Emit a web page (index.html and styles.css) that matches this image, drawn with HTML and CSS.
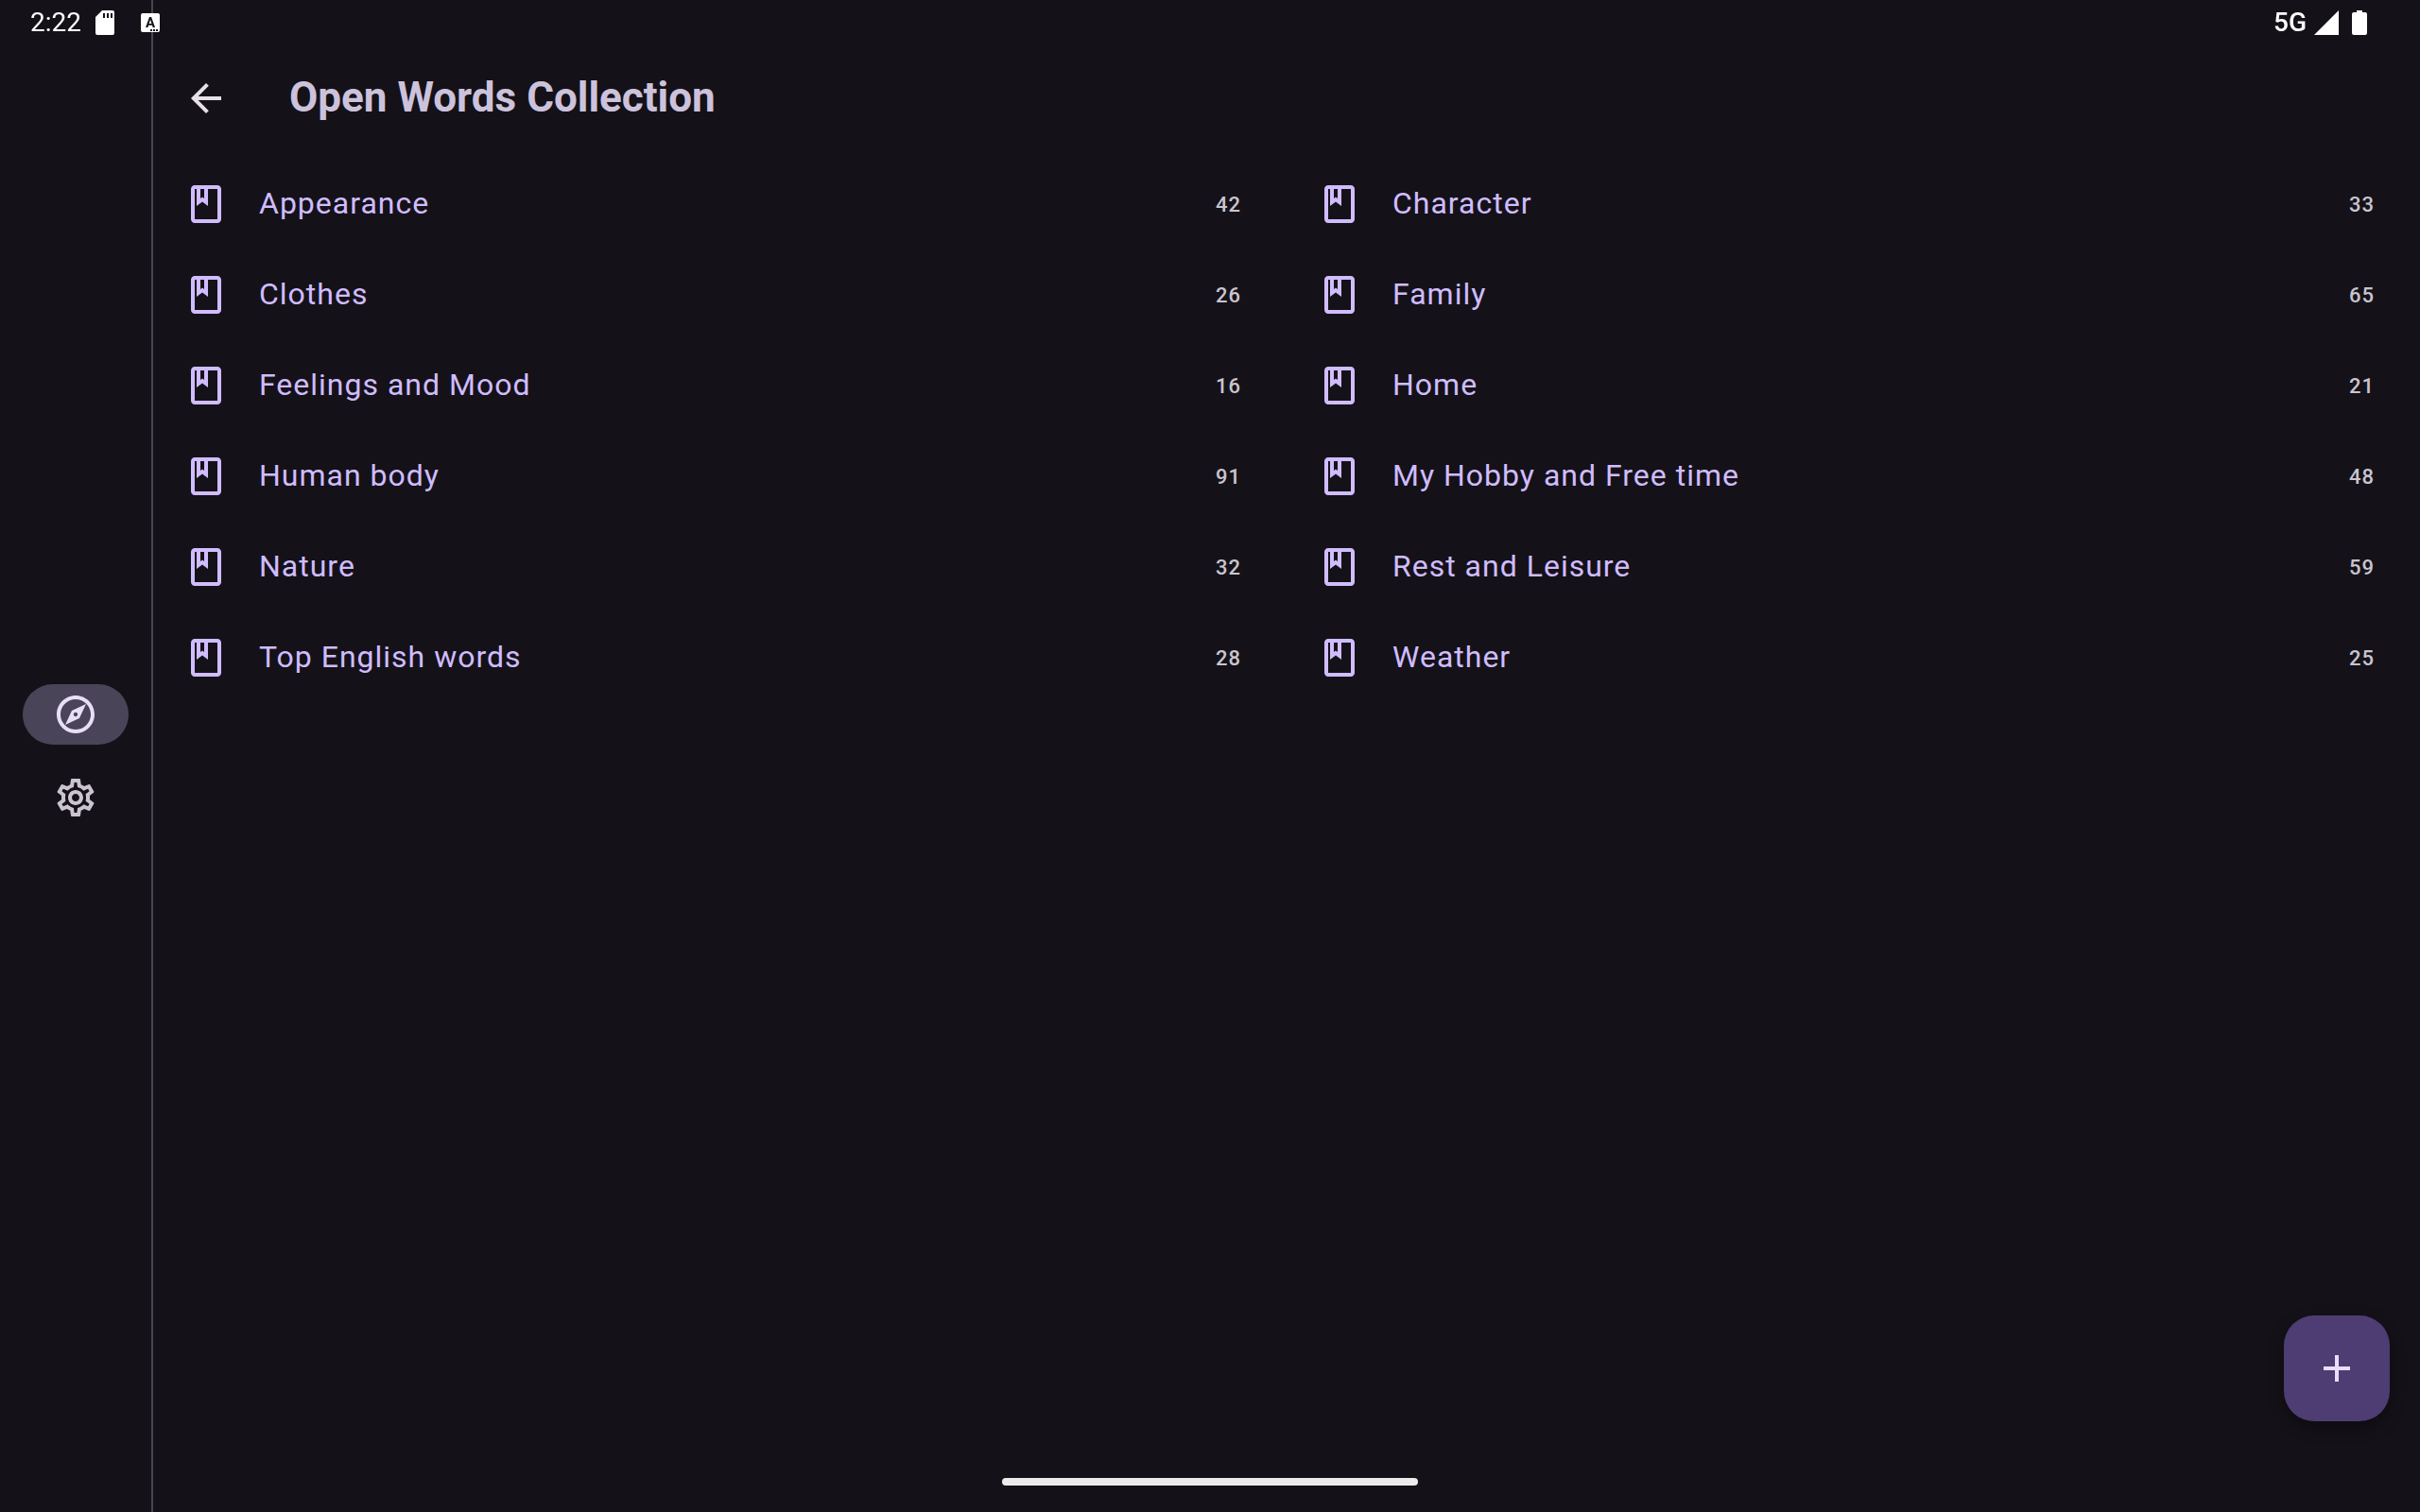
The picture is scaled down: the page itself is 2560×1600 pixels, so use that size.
FILE: index.html
```html
<!DOCTYPE html>
<html lang="en">
<head>
<meta charset="utf-8">
<meta name="viewport" content="width=device-width, initial-scale=1">
<title>Open Words Collection</title>
<link rel="stylesheet" href="styles.css">
</head>
<body>
<svg class="sprite" aria-hidden="true">
  <symbol id="book" viewBox="0 0 24 24"><path fill-rule="evenodd" d="M18 2H6c-1.1 0-2 .9-2 2v16c0 1.1.9 2 2 2h12c1.1 0 2-.9 2-2V4c0-1.1-.9-2-2-2zM9 4h2v5l-1-.75L9 9V4zm9 16H6V4h1v9l3-2.25L13 13V4h5v16z"/></symbol>
</svg>

<div class="status-bar">
  <div class="status-group">
    <span class="clock">2:22</span>
    <svg class="sd-icon" viewBox="0 0 20 26"><path fill-rule="evenodd" d="M7 0h11a2 2 0 0 1 2 2v22a2 2 0 0 1-2 2H2a2 2 0 0 1-2-2V7zM8 3v5h2V3zM12 3v5h2V3zM16 3v5h2V3z"/></svg>
    <svg class="keyboard-icon" viewBox="0 0 20 20"><rect width="20" height="20" rx="2"/><text class="keyboard-letter" x="10" y="15" text-anchor="middle">A</text><path class="cutout" d="M10 17h2v2h-2zM13 17h2v2h-2zM16 17h2v2h-2z"/></svg>
  </div>
  <div class="status-group">
    <span class="network">5G</span>
    <svg class="signal-icon" viewBox="0 0 26 26"><path d="M26 0v26H0z"/></svg>
    <svg class="battery-icon" viewBox="0 0 16 26"><path d="M5 0h6v2h3a2 2 0 0 1 2 2v20a2 2 0 0 1-2 2H2a2 2 0 0 1-2-2V4a2 2 0 0 1 2-2h3z"/></svg>
  </div>
</div>

<div class="app">
  <nav class="rail" aria-label="Main">
    <a class="rail-item selected" href="#explore" aria-label="Explore" aria-current="page">
      <svg class="icon" viewBox="0 0 24 24"><path d="M12 2C6.48 2 2 6.48 2 12s4.48 10 10 10 10-4.48 10-10S17.52 2 12 2zm0 18c-4.41 0-8-3.59-8-8s3.59-8 8-8 8 3.59 8 8-3.59 8-8 8zm-5.5-2.5l7.51-3.49L17.5 6.5 9.99 9.99 6.5 17.5zm5.5-6.6c.61 0 1.1.49 1.1 1.1s-.49 1.1-1.1 1.1-1.1-.49-1.1-1.1.49-1.1 1.1-1.1z"/></svg>
    </a>
    <a class="rail-item" href="#settings" aria-label="Settings">
      <svg class="icon" viewBox="0 0 24 24"><path fill-rule="evenodd" d="M19.43 12.98c.04-.32.07-.64.07-.98 0-.34-.03-.66-.07-.98l2.11-1.65c.19-.15.24-.42.12-.64l-2-3.46c-.09-.16-.26-.25-.44-.25-.06 0-.12.01-.17.03l-2.49 1c-.52-.4-1.08-.73-1.69-.98l-.38-2.65C14.46 2.18 14.25 2 14 2h-4c-.25 0-.46.18-.49.42l-.38 2.65c-.61.25-1.17.59-1.69.98l-2.49-1c-.06-.02-.12-.03-.18-.03-.17 0-.34.09-.43.25l-2 3.46c-.13.22-.07.49.12.64l2.11 1.65c-.04.32-.07.65-.07.98 0 .33.03.66.07.98l-2.11 1.65c-.19.15-.24.42-.12.64l2 3.46c.09.16.26.25.44.25.06 0 .12-.01.17-.03l2.49-1c.52.4 1.08.73 1.69.98l.38 2.65c.03.24.24.42.49.42h4c.25 0 .46-.18.49-.42l.38-2.65c.61-.25 1.17-.59 1.69-.98l2.49 1c.06.02.12.03.18.03.17 0 .34-.09.43-.25l2-3.46c.12-.22.07-.49-.12-.64l-2.11-1.65zm-1.98-1.71c.04.31.05.52.05.73 0 .21-.02.43-.05.73l-.14 1.13.89.7 1.08.84-.7 1.21-1.27-.51-1.04-.42-.9.68c-.43.32-.84.56-1.25.73l-1.06.43-.16 1.13-.2 1.35h-1.4l-.19-1.35-.16-1.13-1.06-.43c-.43-.18-.83-.41-1.23-.71l-.91-.7-1.06.43-1.27.51-.7-1.21 1.08-.84.89-.7-.14-1.13c-.03-.31-.05-.54-.05-.74s.02-.43.05-.73l.14-1.13-.89-.7-1.08-.84.7-1.21 1.27.51 1.04.42.9-.68c.43-.32.84-.56 1.25-.73l1.06-.43.16-1.13.2-1.35h1.39l.19 1.35.16 1.13 1.06.43c.43.18.83.41 1.23.71l.91.7 1.06-.43 1.27-.51.7 1.21-1.07.85-.89.7.14 1.13zM12 8c-2.21 0-4 1.79-4 4s1.79 4 4 4 4-1.79 4-4-1.79-4-4-4zm0 6c-1.1 0-2-.9-2-2s.9-2 2-2 2 .9 2 2-.9 2-2 2z"/></svg>
    </a>
  </nav>

  <main class="content">
    <header class="top-bar">
      <button class="back" type="button" aria-label="Back">
        <svg class="icon" viewBox="0 0 24 24"><path d="M20 11H7.83l5.59-5.59L12 4l-8 8 8 8 1.41-1.41L7.83 13H20v-2z"/></svg>
      </button>
      <h1 class="title">Open Words Collection</h1>
    </header>

    <ul class="collections">
      <li><a class="row" href="#appearance"><svg class="icon"><use href="#book"/></svg><span class="name">Appearance</span><span class="count">42</span></a></li>
      <li><a class="row" href="#character"><svg class="icon"><use href="#book"/></svg><span class="name">Character</span><span class="count">33</span></a></li>
      <li><a class="row" href="#clothes"><svg class="icon"><use href="#book"/></svg><span class="name">Clothes</span><span class="count">26</span></a></li>
      <li><a class="row" href="#family"><svg class="icon"><use href="#book"/></svg><span class="name">Family</span><span class="count">65</span></a></li>
      <li><a class="row" href="#feelings"><svg class="icon"><use href="#book"/></svg><span class="name">Feelings and Mood</span><span class="count">16</span></a></li>
      <li><a class="row" href="#home"><svg class="icon"><use href="#book"/></svg><span class="name">Home</span><span class="count">21</span></a></li>
      <li><a class="row" href="#body"><svg class="icon"><use href="#book"/></svg><span class="name">Human body</span><span class="count">91</span></a></li>
      <li><a class="row" href="#hobby"><svg class="icon"><use href="#book"/></svg><span class="name">My Hobby and Free time</span><span class="count">48</span></a></li>
      <li><a class="row" href="#nature"><svg class="icon"><use href="#book"/></svg><span class="name">Nature</span><span class="count">32</span></a></li>
      <li><a class="row" href="#leisure"><svg class="icon"><use href="#book"/></svg><span class="name">Rest and Leisure</span><span class="count">59</span></a></li>
      <li><a class="row" href="#top"><svg class="icon"><use href="#book"/></svg><span class="name">Top English words</span><span class="count">28</span></a></li>
      <li><a class="row" href="#weather"><svg class="icon"><use href="#book"/></svg><span class="name">Weather</span><span class="count">25</span></a></li>
    </ul>
  </main>
</div>

<button class="fab" type="button" aria-label="Add collection">
  <svg class="icon" viewBox="0 0 24 24"><path d="M19 13h-6v6h-2v-6H5v-2h6V5h2v6h6v2z"/></svg>
</button>
<div class="home-indicator"></div>
</body>
</html>
```
FILE: styles.css
```css
* {
  box-sizing: border-box;
}

body {
  margin: 0;
  background: #141218;
  color: #e6e0e9;
  font-family: Roboto, "Liberation Sans", sans-serif;
}

a {
  color: inherit;
  text-decoration: none;
}

button {
  padding: 0;
  border: 0;
  color: inherit;
  cursor: pointer;
}

.sprite {
  position: absolute;
  width: 0;
  height: 0;
}

svg {
  flex: none;
  fill: currentColor;
}

.icon {
  width: 48px;
  height: 48px;
}

/* System status bar, laid over the app */
.status-bar {
  position: fixed;
  inset: 0 0 auto;
  height: 48px;
  padding: 0 56px 0 32px;
  display: flex;
  justify-content: space-between;
  color: #fff;
  font-size: 28px;
  line-height: 48px;
}

.status-group {
  display: flex;
  align-items: center;
}

.network {
  margin-right: 8px;
  font-weight: 500;
}

.sd-icon {
  width: 20px;
  height: 26px;
  margin-left: 15px;
}

.keyboard-icon {
  width: 20px;
  height: 20px;
  margin-left: 28px;
}

.keyboard-letter {
  fill: #141218;
  font-size: 15px;
  font-weight: 700;
}

.cutout {
  fill: #141218;
}

.signal-icon {
  width: 26px;
  height: 26px;
}

.battery-icon {
  width: 16px;
  height: 26px;
  margin-left: 14px;
}

.app {
  display: flex;
  min-height: 100vh;
}

.rail {
  flex: none;
  width: 162px;
  padding: 0 24px;
  border-right: 2px solid #49454f;
  display: flex;
  flex-direction: column;
  justify-content: center;
  gap: 24px;
}

.rail-item {
  height: 64px;
  border-radius: 32px;
  display: flex;
  align-items: center;
  justify-content: center;
  color: #cac4d0;
}

.rail-item.selected {
  background: #4a4458;
  color: #e8def8;
}

.content {
  flex: 1;
  padding-top: 48px;
}

.top-bar {
  display: flex;
  align-items: center;
  gap: 64px;
  height: 112px;
  padding: 0 32px;
}

.back {
  display: flex;
  background: none;
}

.title {
  margin: 0;
  padding-bottom: 2px;
  color: #ccc2dc;
  font-size: 44px;
  line-height: 56px;
  font-weight: 700;
}

.collections {
  margin: 0;
  padding: 8px 0;
  list-style: none;
  display: grid;
  grid-template-columns: 1fr 1fr;
}

.row {
  display: flex;
  align-items: center;
  gap: 32px;
  height: 96px;
  padding: 0 48px 0 32px;
  color: #d0bcff;
}

.name {
  flex: 1;
  padding-bottom: 2px;
  font-size: 32px;
  line-height: 48px;
  letter-spacing: 1px;
}

.count {
  padding-top: 2px;
  color: #cac4d0;
  font-size: 22px;
  line-height: 32px;
  font-weight: 500;
  letter-spacing: 1px;
}

.fab {
  position: fixed;
  right: 32px;
  bottom: 96px;
  width: 112px;
  height: 112px;
  border-radius: 32px;
  display: flex;
  align-items: center;
  justify-content: center;
  background: #4d3d73;
  color: #eaddff;
  box-shadow: 0 6px 16px rgba(0, 0, 0, 0.4);
}

.home-indicator {
  position: fixed;
  left: 50%;
  bottom: 28px;
  width: 440px;
  height: 8px;
  margin-left: -220px;
  border-radius: 4px;
  background: #ececec;
}
```
